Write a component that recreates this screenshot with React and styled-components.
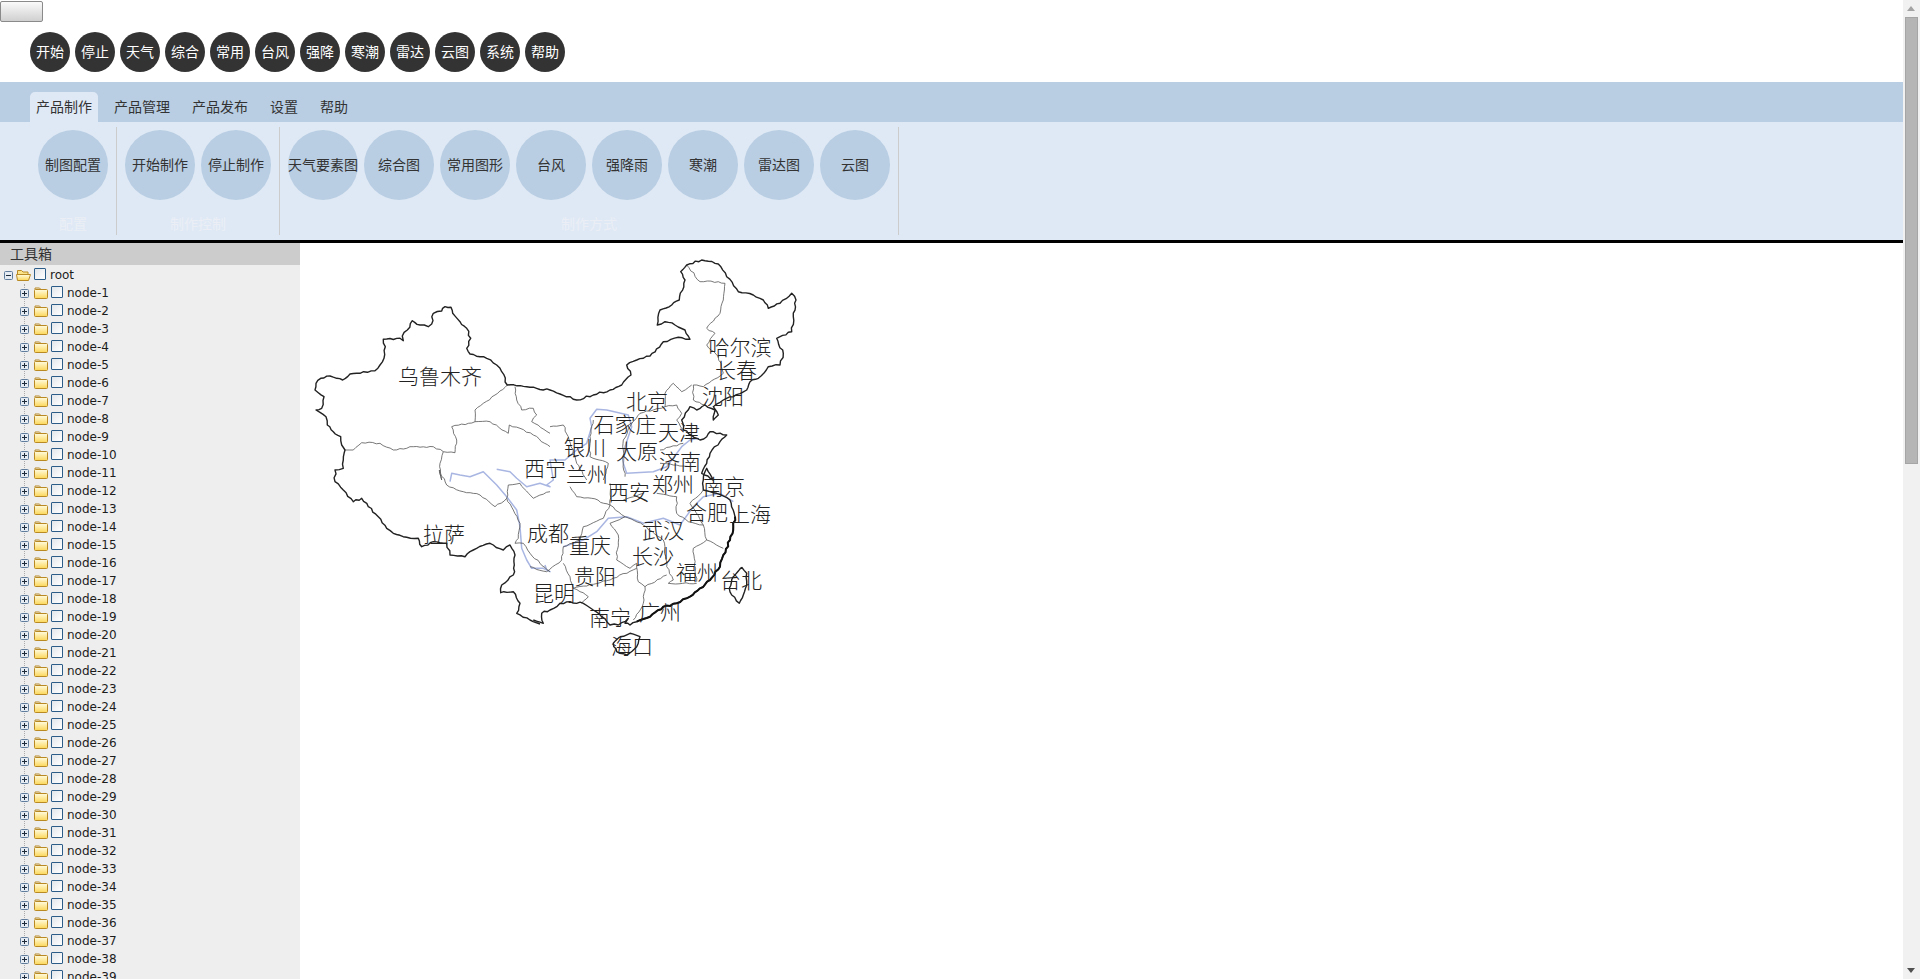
import React from "react";
import styled, { createGlobalStyle } from "styled-components";

const GlobalStyle = createGlobalStyle`
  html, body {
    margin: 0;
    height: 100%;
    overflow: hidden;
    background: #fff;
    font-family: "Noto Sans CJK SC", sans-serif;
    font-size: 14px;
  }
`;

const Page = styled.div`
  display: flex;
  flex-direction: column;
  height: 979px;
  padding-right: 17px;
  overflow: hidden;
`;

const BlankButton = styled.button`
  display: block;
  width: 43px;
  height: 21px;
  margin: 1px 0 0;
  padding: 0;
  border: 1px solid #8a8a8a;
  border-radius: 2px;
  background: linear-gradient(#fafafa, #d0d0d0);
`;

const QuickBar = styled.div`
  display: flex;
  gap: 5px;
  padding: 10px 0 10px 30px;
`;

const QuickButton = styled.div`
  width: 40px;
  height: 40px;
  box-sizing: border-box;
  padding-bottom: 2px;
  border-radius: 50%;
  background: #333;
  color: #fff;
  display: flex;
  align-items: center;
  justify-content: center;
  font-size: 14px;
  line-height: 1;
`;

const TabStrip = styled.div`
  display: flex;
  align-items: flex-end;
  gap: 10px;
  height: 40px;
  padding-left: 30px;
  background: #b9cee3;
`;

const Tab = styled.div`
  height: 30px;
  padding: 0 6px;
  line-height: 28px;
  color: #333;
  font-size: 14px;
  border-radius: 5px 5px 0 0;
  background: ${(props) => (props.$active ? "#dfe9f5" : "transparent")};
`;

const Ribbon = styled.div`
  display: flex;
  height: 121px;
  box-sizing: border-box;
  padding: 5px 0 5px 30px;
  background: #dfe9f5;
  border-bottom: 3px solid #000;
`;

const Group = styled.div`
  display: flex;
  flex-direction: column;
  align-items: center;
  padding: 3px 8px 0;
  border-right: 1px solid #ccc;
`;

const GroupItems = styled.div`
  display: flex;
  gap: 6px;
`;

const GroupLabel = styled.div`
  margin-top: 12px;
  color: #ebeff5;
  font-size: 14px;
  line-height: 22px;
`;

const RibbonButton = styled.div`
  width: 70px;
  height: 70px;
  box-sizing: border-box;
  padding-bottom: 2px;
  border-radius: 50%;
  background: #b9cee3;
  color: #333;
  display: flex;
  align-items: center;
  justify-content: center;
  font-size: 14px;
  white-space: nowrap;
`;

const Body = styled.div`
  display: flex;
  flex: 1;
  min-height: 0;
`;

const Sidebar = styled.aside`
  width: 300px;
  flex: none;
  background: #eee;
  overflow: hidden;
`;

const SidebarTitle = styled.div`
  height: 22px;
  line-height: 20px;
  padding-left: 10px;
  background: #ccc;
  color: #333;
  font-size: 14px;
`;

const Tree = styled.div`
  padding-top: 1px;
  font-family: "DejaVu Sans", sans-serif;
  font-size: 12px;
  color: #1c1c1c;
`;

const TreeRow = styled.div`
  display: flex;
  align-items: center;
  height: 18px;
  padding-left: ${(props) => (props.$child ? "20px" : "4px")};
`;

const Children = styled.div`
  position: relative;
  &::before {
    content: "";
    position: absolute;
    left: 24px;
    top: 0;
    bottom: 0;
    border-left: 1px dotted #aaa;
  }
`;

const ExpandIcon = styled.svg`
  position: relative;
  width: 9px;
  height: 9px;
  flex: none;
`;

const FolderIcon = styled.svg`
  flex: none;
  width: ${(props) => (props.$open ? "15px" : "14px")};
  height: 12px;
  margin: 0 0 1px ${(props) => (props.$open ? "3px" : "5px")};
`;

const Check = styled.span`
  flex: none;
  box-sizing: border-box;
  width: 12px;
  height: 12px;
  margin: 0 4px 3px 3px;
  border: 1px solid #2c5c88;
  border-radius: 1px;
  background: linear-gradient(135deg, #e2e6ea, #fff);
`;

const MapArea = styled.main`
  flex: 1;
  padding: 12px 0 0 10px;
`;

const MapSvg = styled.svg`
  display: block;
  width: 500px;
  height: 420px;
`;

const MapLabel = styled.text`
  font-family: "Noto Sans CJK SC", sans-serif;
  font-weight: 300;
  font-size: 21px;
  fill: #222;
  text-anchor: middle;
  dominant-baseline: central;
`;

const Scrollbar = styled.div`
  position: fixed;
  top: 0;
  right: 0;
  bottom: 0;
  width: 17px;
  background: #f1f1f1;
`;

const ScrollArrow = styled.span`
  position: absolute;
  left: 4px;
  ${(props) => (props.$down ? "bottom: 6px;" : "top: 6px;")}
  width: 0;
  height: 0;
  border-left: 4px solid transparent;
  border-right: 4px solid transparent;
  ${(props) => (props.$down ? "border-top: 5px solid #505050;" : "border-bottom: 5px solid #a3a3a3;")}
`;

const ScrollThumb = styled.div`
  position: absolute;
  top: 17px;
  left: 2px;
  width: 13px;
  height: 447px;
  box-sizing: border-box;
  background: #b5b5b5;
  border: 1px solid #a5a5a5;
`;

const quickItems = ["开始", "停止", "天气", "综合", "常用", "台风", "强降", "寒潮", "雷达", "云图", "系统", "帮助"];
const tabs = ["产品制作", "产品管理", "产品发布", "设置", "帮助"];
const groups = [
  { label: "配置", items: ["制图配置"] },
  { label: "制作控制", items: ["开始制作", "停止制作"] },
  { label: "制作方式", items: ["天气要素图", "综合图", "常用图形", "台风", "强降雨", "寒潮", "雷达图", "云图"] },
];
const nodes = Array.from({ length: 39 }, (_, i) => `node-${i + 1}`);

// map outlines were traced from zoomed crops, so each run is kept in its crop's coordinates
const A = [300, 250];
const B = [550, 250];
const C = [530, 460];
const D = [300, 460];

const toPoints = (runs) =>
  runs.flatMap(([o, pts]) => {
    const out = [];
    for (let i = 0; i < pts.length; i += 2) {
      out.push([o[0] + pts[i] / 3, o[1] + pts[i + 1] / 3]);
    }
    return out;
  });

// breaks each straight run into short wobbly bits, the scanned map is not smooth
const wobble = (points, amp) => {
  const out = [points[0]];
  for (let i = 1; i < points.length; i++) {
    const [x0, y0] = points[i - 1];
    const [x1, y1] = points[i];
    const len = Math.hypot(x1 - x0, y1 - y0);
    const steps = Math.max(1, Math.round(len / 3.5));
    for (let s = 1; s <= steps; s++) {
      const t = s / steps;
      const seed = Math.sin((x0 + s) * 12.9898 + (y0 + s) * 78.233) * 43758.5453;
      const off = s === steps ? 0 : ((seed - Math.floor(seed)) - 0.5) * 2 * amp;
      out.push([x0 + (x1 - x0) * t - ((y1 - y0) / len) * off, y0 + (y1 - y0) * t + ((x1 - x0) / len) * off]);
    }
  }
  return out;
};

const toPath = (points) => "M" + points.map(([x, y]) => `${x.toFixed(1)} ${y.toFixed(1)}`).join(" L");
const trace = (...runs) => toPath(toPoints(runs));
const rough = (amp, ...runs) => toPath(wobble(toPoints(runs), amp));

const outline = [
  rough(
    1,
    [D, [720,492, 690,480, 650,460, 660,430, 640,395, 602,398, 605,375, 640,345, 645,285, 630,255, 610,270, 570,250, 520,270, 495,290, 450,285, 440,250, 400,245, 365,260, 355,235, 320,232, 280,220, 260,205, 235,170, 205,140, 185,115, 160,125, 130,90, 105,65, 105,30, 130,25, 130,0]],
    [A, [135,600, 125,585, 122,560, 100,545, 82,525, 78,500, 60,487, 48,480, 65,475, 72,440, 55,428, 45,420, 48,400, 62,385, 90,378, 110,385, 128,390, 150,372, 180,370, 225,362, 240,345, 252,325, 256,290, 250,268, 300,265, 310,272, 307,258, 322,240, 337,212, 360,225, 385,230, 395,222, 400,190, 425,183, 435,170, 453,172, 458,190, 480,215, 500,235, 512,265, 500,295, 510,312, 560,325, 590,345, 605,365, 622,405, 680,410, 750,420]],
    [B, [30,432, 80,450, 130,435, 180,420, 215,405, 243,375, 230,345, 260,330, 300,318, 340,275, 385,262, 420,268, 405,240, 375,225, 345,215, 322,225, 330,180, 365,165, 388,150, 405,90, 392,65, 410,45, 455,30, 505,42, 530,80, 565,125, 610,135, 640,150, 655,175, 690,160, 725,130, 738,150, 730,200, 725,245, 680,265, 700,310, 690,345, 655,350, 625,385, 600,395, 590,420, 550,440, 520,450, 490,470, 505,495, 490,510, 495,480, 465,465, 440,480, 420,470, 395,510, 400,540, 450,570, 470,560, 480,545, 530,555, 510,575, 480,610, 470,640, 455,670, 490,690]],
    [C, [530,25, 520,60, 520,90, 560,100, 600,120, 615,170, 610,200, 600,240, 580,285, 570,320, 540,360, 510,385, 480,410, 440,430, 400,440, 360,470, 320,485, 300,495, 285,490, 295,475, 265,495, 240,495, 215,470, 190,450, 160,430, 120,425, 90,430, 60,450, 35,460, 40,490, 10,480]]
  ),
  rough(0.8, [C, [270,530, 300,520, 330,530, 320,560, 290,585, 260,575, 250,550, 270,530]]),
  rough(0.8, [C, [635,322, 650,340, 650,375, 640,405, 628,430, 605,405, 598,385, 610,350, 635,322]]),
];

// the south-east coast reads much heavier in the picture
const heavyCoast = rough(1, [C, [615,170, 610,200, 600,240, 580,285, 570,320, 540,360, 510,385, 480,410, 440,430, 400,440, 360,470, 320,485]]);

const borders = [
  rough(0.8, [A, [135,600, 160,600, 185,578, 240,580, 280,600, 340,590, 400,590, 430,605, 465,608, 470,570, 455,530, 525,515, 570,515, 625,550, 628,525, 660,535, 700,555, 750,590]]),
  rough(0.8, [A, [622,405, 585,435, 550,460, 525,480, 525,515]]),
  rough(0.8, [A, [645,410, 650,450, 665,480, 700,475, 710,495, 695,515, 750,550]]),
  rough(0.8, [A, [430,605, 420,640, 425,690]], [D, [418,30, 440,75, 490,95, 540,105, 585,140, 620,115, 640,150, 660,190, 655,235, 645,250]]),
  rough(0.8, [D, [620,115, 625,75, 660,70, 700,115, 750,95]]),
  rough(0.8, [D, [645,250, 670,250, 690,280, 720,310, 750,335]]),
  rough(0.8, [C, [120,80, 140,110, 185,115, 240,135, 220,175, 160,200, 150,240, 100,260, 95,300, 50,335, 0,320]]),
  rough(0.8, [C, [240,135, 285,170, 240,190, 265,225, 260,300, 300,325, 320,310, 325,365, 345,380, 340,430, 310,480]]),
  rough(0.8, [C, [285,170, 340,195, 400,240, 410,320, 430,360, 415,370, 500,370]]),
  rough(0.8, [C, [345,380, 410,345]]),
  rough(0.8, [C, [240,135, 240,70]]),
  rough(0.8, [C, [340,100, 280,120]]),
  rough(0.8, [C, [380,100, 440,110, 440,160, 475,185, 520,195, 530,240, 490,265, 500,365]]),
  rough(0.8, [C, [530,240, 580,265]]),
  rough(0.8, [C, [520,195, 480,130, 520,90]]),
  rough(0.8, [C, [100,310, 120,350, 130,385, 240,360, 320,325]]),
  rough(0.8, [C, [130,385, 150,395, 175,410, 155,430]]),
  rough(0.8, [B, [410,45, 450,95, 505,95, 525,100, 520,150, 510,190, 470,235, 495,250, 470,285, 505,320, 520,370, 460,410, 430,405, 430,450, 465,465]]),
  rough(0.8, [B, [425,405, 395,425, 370,400, 345,430, 345,470, 310,480, 270,490, 240,530, 220,570, 220,640, 225,680]]),
  rough(0.8, [B, [345,470, 380,465, 395,490, 380,510, 400,540]]),
  rough(0.8, [B, [330,600, 400,580]]),
  rough(0.8, [B, [330,640, 420,650]]),
  rough(0.8, [B, [0,530, 40,525, 55,560, 80,640, 110,690]]),
  rough(0.8, [B, [130,510, 120,560, 120,620, 175,640, 160,690]]),
];

const rivers = [
  trace([D, [450,65, 455,40, 480,45, 510,50, 550,35, 590,75, 620,110, 650,150, 660,200, 665,265, 680,300, 695,325, 730,325, 750,335]], [C, [50,330, 45,315]]),
  trace([D, [590,28, 630,35, 650,55, 680,80, 720,70, 750,80]], [C, [50,75, 70,60]], [B, [0,630, 45,630, 80,600, 110,580, 125,530, 120,505, 140,478, 170,480, 235,495, 245,530, 225,590, 220,640, 230,670, 310,665, 350,650, 395,590, 420,570, 445,565]]),
  trace([C, [100,260, 160,240, 200,215, 235,175, 290,170, 340,190, 400,175, 450,195, 490,140, 520,110, 570,100, 610,125]]),
];

const cities = [
  ["乌鲁木齐", 440, 375], ["哈尔滨", 740, 346], ["长春", 736, 369], ["沈阳", 723, 395],
  ["北京", 647, 400], ["石家庄", 625, 423], ["天津", 679, 431], ["银川", 585, 446],
  ["太原", 637, 450], ["济南", 680, 460], ["西宁", 545, 467], ["兰州", 587, 473],
  ["西安", 629, 491], ["郑州", 673, 483], ["南京", 724, 485], ["合肥", 707, 511],
  ["上海", 750, 513], ["成都", 548, 532], ["拉萨", 444, 533], ["重庆", 590, 544],
  ["武汉", 663, 529], ["长沙", 653, 555], ["福州", 697, 571], ["台北", 741, 579],
  ["贵阳", 595, 575], ["昆明", 554, 592], ["南宁", 610, 616], ["广州", 660, 611],
  ["海口", 632, 645],
];

const Expand = ({ open }) => (
  <ExpandIcon viewBox="0 0 9 9">
    <rect x="0.5" y="0.5" width="8" height="8" rx="1" fill="#e4ebf3" stroke="#5f7c9c" />
    <path d={open ? "M2 4.5h5" : "M2 4.5h5M4.5 2v5"} stroke="#1c2a3a" />
  </ExpandIcon>
);

const Folder = ({ open }) => (
  <FolderIcon $open={open} viewBox={open ? "0 1 15 12" : "0 1 14 12"}>
    <defs>
      <linearGradient id="folderFill" x1="0" y1="0" x2="0" y2="1">
        <stop offset="0" stopColor="#fffbe0" />
        <stop offset="1" stopColor="#fcd758" />
      </linearGradient>
    </defs>
    {open ? (
      <>
        <path d="M1.500 11V2.500h4l1.500 1.500h5V6" fill="#fbe38a" stroke="#b98a24" />
        <path d="M.5 6.500h14l-2 6H1.500z" fill="url(#folderFill)" stroke="#b98a24" />
      </>
    ) : (
      <>
        <path d="M1 3.500V2h4.500L7 3.500" fill="none" stroke="#b98a24" />
        <rect x="0.5" y="3.500" width="13" height="9" rx="1" fill="url(#folderFill)" stroke="#b98a24" />
      </>
    )}
  </FolderIcon>
);

const App = () => (
  <>
    <GlobalStyle />
    <Page>
      <BlankButton />
      <QuickBar>
        {quickItems.map((name) => (
          <QuickButton key={name}>{name}</QuickButton>
        ))}
      </QuickBar>
      <TabStrip>
        {tabs.map((name, i) => (
          <Tab key={name} $active={i === 0}>{name}</Tab>
        ))}
      </TabStrip>
      <Ribbon>
        {groups.map((group) => (
          <Group key={group.label}>
            <GroupItems>
              {group.items.map((name) => (
                <RibbonButton key={name}>{name}</RibbonButton>
              ))}
            </GroupItems>
            <GroupLabel>{group.label}</GroupLabel>
          </Group>
        ))}
      </Ribbon>
      <Body>
        <Sidebar>
          <SidebarTitle>工具箱</SidebarTitle>
          <Tree>
            <TreeRow>
              <Expand open />
              <Folder open />
              <Check />
              root
            </TreeRow>
            <Children>
              {nodes.map((name) => (
                <TreeRow key={name} $child>
                  <Expand />
                  <Folder />
                  <Check />
                  {name}
                </TreeRow>
              ))}
            </Children>
          </Tree>
        </Sidebar>
        <MapArea>
          <MapSvg viewBox="310 255 500 420">
            <g fill="none" strokeLinejoin="round">
              {rivers.map((d, i) => (
                <path key={i} d={d} stroke="#a9b6e2" strokeWidth="1.5" />
              ))}
              {borders.map((d, i) => (
                <path key={i} d={d} stroke="#555" strokeWidth="0.8" />
              ))}
              {outline.map((d, i) => (
                <path key={i} d={d} stroke="#222" strokeWidth="1.4" />
              ))}
              <path d={heavyCoast} stroke="#111" strokeWidth="2" />
            </g>
            {cities.map(([name, x, y]) => (
              <MapLabel key={name} x={x} y={y}>{name}</MapLabel>
            ))}
          </MapSvg>
        </MapArea>
      </Body>
    </Page>
    <Scrollbar>
      <ScrollArrow />
      <ScrollThumb />
      <ScrollArrow $down />
    </Scrollbar>
  </>
);

export default App;
